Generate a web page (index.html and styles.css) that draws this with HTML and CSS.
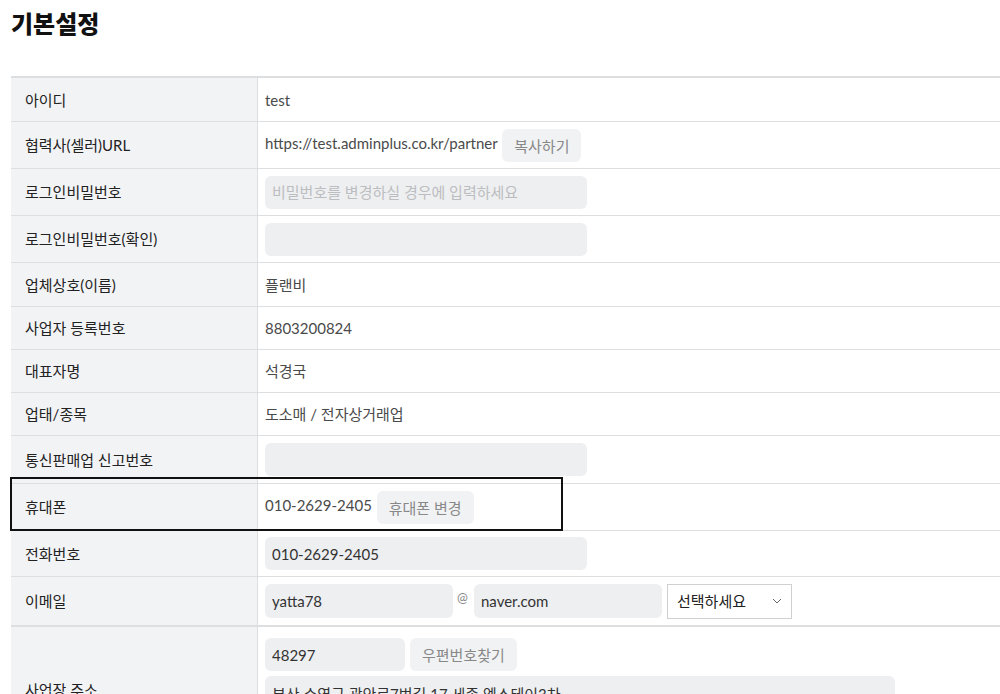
FILE: index.html
```html
<!DOCTYPE html>
<html lang="ko">

<head>
    <meta charset="UTF-8">
    <meta name="viewport" content="width=device-width, initial-scale=1.0">
    <title>기본설정</title>
    <link rel="stylesheet" href="styles.css">
</head>

<body>
    <div class="page">
        <h2 class="page-title">기본설정</h2>

        <table class="form-table">
            <tr class="h44">
                <th>아이디</th>
                <td>test</td>
            </tr>
            <tr class="h47">
                <th>협력사(셀러)URL</th>
                <td>https://test.adminplus.co.kr/partner <button class="btn-gray">복사하기</button></td>
            </tr>
            <tr class="h47">
                <th>로그인비밀번호</th>
                <td><input type="password" class="input" placeholder="비밀번호를 변경하실 경우에 입력하세요"></td>
            </tr>
            <tr class="h47">
                <th>로그인비밀번호(확인)</th>
                <td><input type="password" class="input"></td>
            </tr>
            <tr class="h44">
                <th>업체상호(이름)</th>
                <td>플랜비</td>
            </tr>
            <tr>
                <th>사업자 등록번호</th>
                <td>8803200824</td>
            </tr>
            <tr>
                <th>대표자명</th>
                <td>석경국</td>
            </tr>
            <tr>
                <th>업태/종목</th>
                <td>도소매 / 전자상거래업</td>
            </tr>
            <tr class="h48">
                <th>통신판매업 신고번호</th>
                <td><input type="text" class="input"></td>
            </tr>
            <tr class="h47">
                <th class="has-mark">휴대폰<div class="highlight"></div></th>
                <td>010-2629-2405 <button class="btn-gray">휴대폰 변경</button></td>
            </tr>
            <tr class="h46">
                <th>전화번호</th>
                <td><input type="text" class="input" value="010-2629-2405"></td>
            </tr>
            <tr class="h49">
                <th>이메일</th>
                <td>
                    <div class="email-line">
                        <input type="text" class="input input-mail" value="yatta78">
                        <span class="at">@</span>
                        <input type="text" class="input input-mail" value="naver.com">
                        <div class="select">
                            <span>선택하세요</span>
                            <svg width="10" height="6" viewBox="0 0 10 6"><polyline points="1,1 5,5 9,1" fill="none" stroke="#666" stroke-width="1"/></svg>
                        </div>
                    </div>
                </td>
            </tr>
            <tr class="addr-row">
                <th>사업장 주소</th>
                <td>
                    <div class="addr-line">
                        <input type="text" class="input input-zip" value="48297">
                        <button class="btn-gray">우편번호찾기</button>
                    </div>
                    <div class="addr-line">
                        <input type="text" class="input input-addr" value="부산 수영구 광안로7번길 17 세종 엑스테이3차">
                    </div>
                    <div class="addr-line">
                        <input type="text" class="input input-addr" value="">
                    </div>
                </td>
            </tr>
        </table>
    </div>
</body>

</html>
```

FILE: styles.css
```css
body {
    margin: 0;
    background-color: white;
    font-family: Lato, "Noto Sans CJK KR", sans-serif;
    color: #222;
    overflow: hidden;
}

.page {
    padding: 0 0 0 11px;
}

.page-title {
    font-size: 24px;
    line-height: 30px;
    font-weight: 800;
    margin: 9px 0 37px 0;
    color: #111;
}

.form-table {
    width: 100%;
    border-collapse: collapse;
    border-top: 2px solid #dddee0;
    font-size: 15px;
}

.form-table th,
.form-table td {
    height: 30px;
    padding: 6px 7px;
    border-bottom: 1px solid #dddee0;
    line-height: 20px;
    vertical-align: middle;
    text-align: left;
}

/* row heights taken from the screen */
.form-table .h44 th,
.form-table .h44 td {
    height: 31px;
}

.form-table .h46 th,
.form-table .h46 td {
    height: 33px;
}

.form-table .h47 th,
.form-table .h47 td {
    height: 34px;
}

.form-table .h48 th,
.form-table .h48 td {
    height: 35px;
}

.form-table .h49 th,
.form-table .h49 td {
    height: 36px;
}

.form-table th {
    width: 225px;
    padding-left: 14px;
    background-color: #f2f3f5;
    border-right: 1px solid #dddee0;
    font-weight: normal;
    color: #222;
}

.form-table td {
    color: #4a4a4a;
}

.input {
    width: 322px;
    height: 33px;
    box-sizing: border-box;
    border: none;
    border-radius: 6px;
    background-color: #eeeff1;
    padding: 0 7px;
    font-family: inherit;
    font-size: 15px;
    color: #333;
    vertical-align: middle;
}

.input::placeholder {
    color: #bcbdc0;
}

.btn-gray {
    height: 33px;
    padding: 0 12px;
    margin-left: 1px;
    border: none;
    border-radius: 6px;
    background-color: #f1f2f4;
    color: #888;
    font-family: inherit;
    font-size: 15px;
    vertical-align: middle;
}

.has-mark {
    position: relative;
}

.highlight {
    position: absolute;
    top: -7px;
    left: -1px;
    width: 553px;
    height: 54px;
    box-sizing: border-box;
    border: 2px solid #111;
    pointer-events: none;
}

.email-line {
    display: flex;
    align-items: center;
}

.input-mail {
    width: 188px;
    height: 34px;
}

.at {
    width: 23px;
    text-align: center;
    color: #888;
    font-size: 13px;
    margin-top: -8px;
    margin-left: -2px;
}

.select {
    display: flex;
    align-items: center;
    justify-content: space-between;
    width: 125px;
    height: 35px;
    box-sizing: border-box;
    margin-left: 5px;
    padding: 0 9px 0 9px;
    border: 1px solid #cfd0d2;
    background-color: white;
    color: #222;
}

.addr-row th,
.addr-row td {
    border-top: 2px solid #dddee0;
}

.addr-row td {
    padding-top: 11px;
    padding-bottom: 4px;
}

.addr-line {
    display: flex;
    align-items: center;
    gap: 5px;
    margin-bottom: 5px;
}

.addr-line:last-child {
    margin-bottom: 0;
}

.input-zip {
    width: 140px;
}

.addr-line .btn-gray {
    margin-left: 0;
}

.input-addr {
    width: 630px;
    height: 34px;
}
```
